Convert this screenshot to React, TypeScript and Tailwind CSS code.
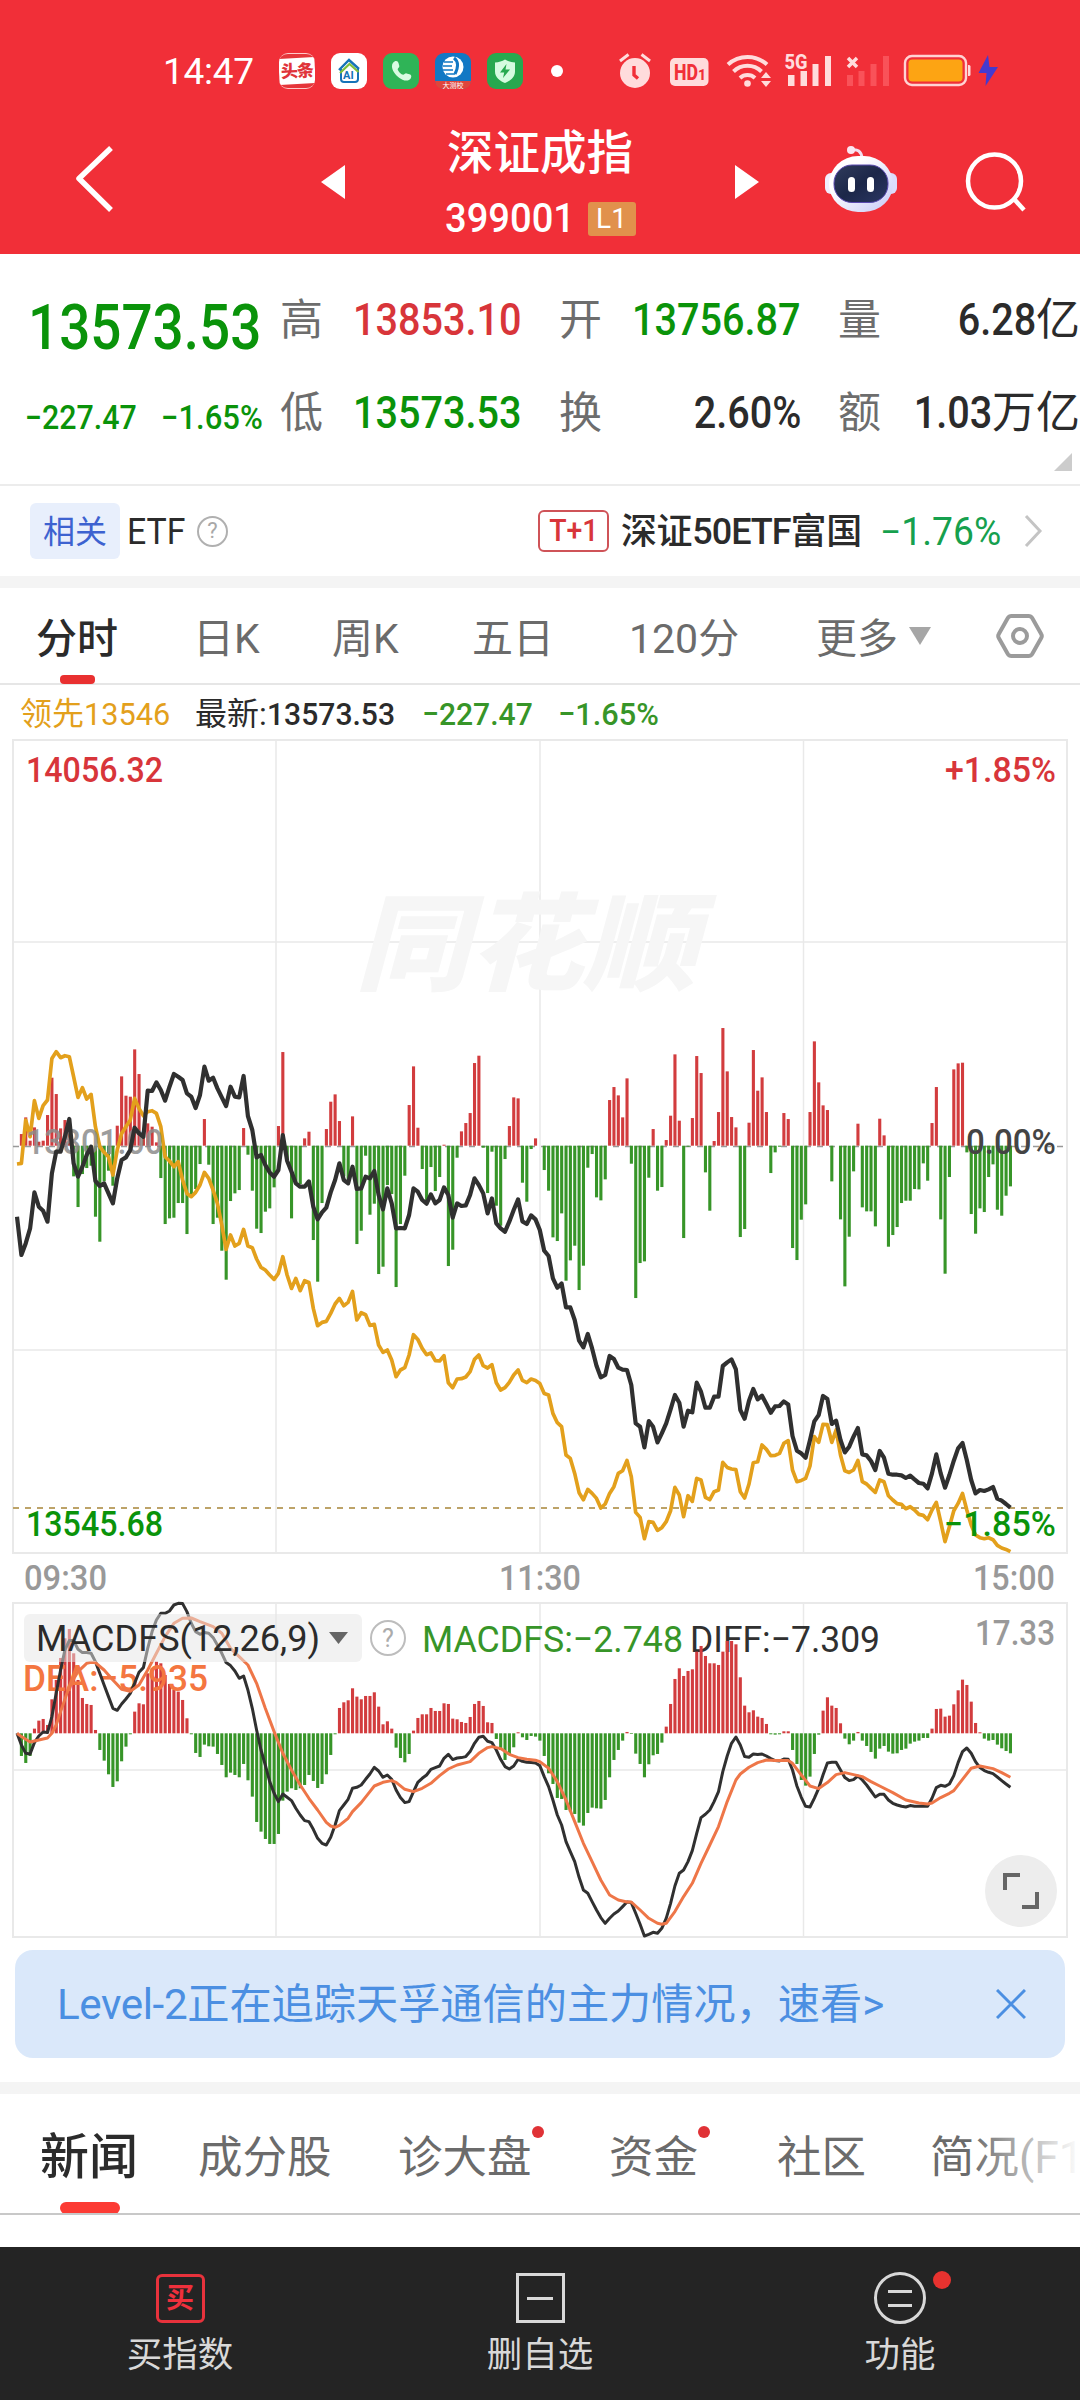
import { clsx } from "clsx";

const X0 = 17;
const STEP = 4.357;
// All series are stored in thirds of a pixel, measured from the zero line
const UNIT = 1 / 3;
const PRICE_ZERO = 1145.7;
const MACD_ZERO = 1733.3;

const flow = [
  0, 35, 85, 15, 55, 12, 15, 92, 204, 155, 52, 77, 40, -92, -184, -85, -67, -60, -213, -288,
  -107, -75, -120, 60, 208, 150, 147, 289, 215, 25, 67, 57, 10, -97, -235, -218, -216, -172, -172, -265,
  -150, -130, -55, 80, -57, -235, -216, -315, -402, -166, -143, -133, 53, -27, -135, -249, -262, -198, -188, -125,
  59, 281, -40, -218, -110, -115, 22, 42, -283, -408, -172, 50, 132, 154, 74, -92, -100, 88, -295, -255,
  -30, -207, -174, -385, -363, -118, -145, -424, -235, -90, 122, 238, 54, -70, -170, -64, -136, -94, 3, -361,
  -312, -36, 43, 68, 98, 248, 270, -6, -142, -18, -180, -240, -40, 59, 145, 142, -111, -168, -10, 22,
  0, -73, -135, -275, -286, -203, -405, -344, -300, -433, -360, -66, -25, -155, -164, -101, 137, 176, 151, 85,
  202, -54, -457, -352, -347, -96, 50, -135, -124, 17, 90, 274, 75, -277, -3, 83, 269, 218, -80, -195,
  14, 101, 353, 223, 86, 55, -274, -250, 69, 287, 165, 205, 101, -82, -20, -3, 98, 80, -307, -343,
  -222, -176, 101, 313, 190, 121, 107, -107, 0, -221, -422, -273, -77, 66, -185, -197, -197, -242, 81, 31,
  -303, -268, -244, -172, -165, -165, -130, -131, -53, -105, 68, 176, -221, -384, -94, 229, 247, 249, -20, -205,
  -264, -188, -199, -94, -56, -192, -210, -150, -122,
];

const price = [
  213, 328, 293, 248, 140, 183, 195, 228, 83, 18, 18, -27, -80, 53, 93, 63, 28, 3, 106, 121,
  113, 143, 173, 98, 43, 35, 13, -54, -37, -27, -165, -164, -190, -167, -135, -177, -215, -207, -197, -157,
  -147, -113, -152, -237, -195, -204, -172, -145, -119, -177, -147, -145, -209, -89, -47, 35, 28, 58, 80, 93,
  73, -32, 45, 78, 113, 123, 123, 107, 183, 221, 200, 186, 140, 103, 53, 103, 113, 63, 130, 128,
  93, 98, 76, 148, 191, 128, 173, 248, 247, 248, 208, 128, 138, 163, 174, 146, 173, 163, 125, 148,
  216, 173, 181, 179, 148, 98, 118, 143, 203, 158, 233, 248, 258, 228, 193, 161, 227, 235, 209, 221,
  253, 315, 331, 398, 426, 413, 485, 485, 523, 585, 605, 565, 608, 660, 695, 688, 631, 640, 666, 672,
  673, 718, 833, 843, 905, 826, 843, 890, 863, 833, 791, 748, 771, 843, 795, 800, 711, 738, 786, 786,
  753, 753, 661, 650, 641, 671, 793, 819, 765, 730, 761, 750, 775, 801, 782, 781, 767, 776, 871, 915,
  923, 936, 883, 827, 808, 751, 760, 835, 825, 883, 920, 903, 873, 847, 926, 929, 946, 973, 916, 936,
  984, 987, 987, 989, 997, 990, 1001, 1012, 1014, 1028, 983, 926, 983, 1026, 988, 945, 908, 892, 943, 1003,
  1043, 1033, 1036, 1031, 1024, 1059, 1065, 1075, 1086,
];

const lead = [
  55, 53, -77, -27, -135, -82, -120, -137, -262, -282, -264, -270, -267, -207, -145, -174, -140, -154, -57, 3,
  20, 33, 88, 13, -37, -57, -77, -142, -112, -90, -102, -105, -97, -57, 33, 46, 63, 48, 103, 143,
  153, 140, 118, 80, 98, 133, 173, 238, 311, 268, 301, 293, 251, 301, 306, 340, 365, 373, 388, 401,
  383, 333, 388, 428, 398, 435, 405, 410, 488, 540, 530, 527, 503, 475, 458, 480, 470, 437, 523, 501,
  507, 539, 536, 598, 620, 613, 643, 693, 673, 666, 628, 567, 581, 608, 627, 622, 645, 646, 630, 711,
  726, 700, 699, 694, 678, 641, 628, 660, 667, 657, 711, 733, 726, 710, 688, 673, 704, 711, 700, 704,
  713, 743, 748, 803, 831, 843, 928, 938, 983, 1041, 1062, 1031, 1043, 1058, 1087, 1075, 1043, 1023, 983, 975,
  944, 993, 1100, 1115, 1179, 1128, 1130, 1154, 1146, 1128, 1095, 1025, 1048, 1113, 1050, 1067, 998, 1003, 1055, 1062,
  1038, 1033, 950, 965, 970, 972, 1038, 1057, 1015, 951, 948, 898, 911, 930, 929, 923, 893, 885, 973, 1008,
  1004, 998, 961, 873, 890, 836, 837, 890, 853, 928, 975, 980, 973, 944, 1008, 1015, 1028, 1040, 1003, 1008,
  1050, 1063, 1074, 1076, 1089, 1083, 1093, 1106, 1109, 1122, 1093, 1070, 1128, 1188, 1143, 1095, 1073, 1043, 1093, 1138,
  1168, 1176, 1179, 1176, 1182, 1199, 1207, 1211, 1218,
];

const macd = [
  0, -68, -89, -68, 14, 38, 43, 25, 102, 160, 226, 285, 313, 240, 160, 106, 88, 85, 10, -50,
  -82, -123, -161, -144, -84, -40, -3, 65, 90, 87, 180, 195, 215, 210, 175, 148, 130, 125, 100, 45,
  -3, -59, -71, -34, -39, -40, -62, -95, -132, -118, -125, -132, -92, -141, -190, -266, -295, -317, -332, -332,
  -302, -202, -175, -165, -170, -165, -155, -125, -143, -164, -152, -123, -65, -3, 76, 93, 99, 135, 110, 102,
  112, 112, 123, 80, 27, 36, 14, -43, -74, -87, -62, 8, 46, 57, 57, 76, 67, 67, 90, 88,
  44, 42, 34, 31, 49, 88, 97, 82, 33, 31, -17, -50, -80, -65, -42, 3, -12, -20, -8, -10,
  -22, -68, -120, -152, -194, -197, -230, -235, -242, -268, -277, -239, -223, -225, -226, -200, -132, -80, -50, -22,
  4, -2, -61, -92, -132, -93, -66, -62, -28, 20, 88, 163, 195, 172, 187, 192, 245, 262, 232, 210,
  210, 205, 245, 277, 277, 267, 168, 83, 63, 69, 50, 46, 28, -3, -4, -3, 6, 6, -50, -92,
  -140, -157, -130, -62, -4, 68, 108, 83, 76, 30, -16, -33, -22, 4, -22, -38, -56, -76, -46, -38,
  -55, -61, -60, -50, -46, -31, -25, -22, -14, -14, 14, 73, 74, 50, 53, 87, 129, 161, 145, 95,
  31, 3, -16, -22, -20, -34, -45, -53, -60,
];

const diff = [
  0, 35, 60, 62, 28, 8, -4, -2, -50, -120, -190, -250, -278, -278, -252, -242, -242, -240, -215, -180,
  -145, -110, -75, -69, -88, -103, -120, -150, -183, -197, -255, -305, -340, -360, -360, -367, -385, -390, -389, -365,
  -330, -305, -297, -302, -300, -287, -265, -240, -212, -203, -187, -165, -172, -130, -75, -10, 50, 95, 145, 180,
  205, 182, 192, 202, 225, 245, 262, 265, 288, 315, 330, 335, 312, 275, 232, 215, 198, 165, 162, 155,
  138, 122, 102, 113, 132, 125, 138, 170, 193, 208, 205, 175, 147, 135, 125, 108, 103, 98, 75, 63,
  79, 74, 73, 70, 55, 30, 12, 9, 24, 28, 50, 78, 100, 107, 98, 78, 84, 87, 88, 89,
  97, 130, 160, 200, 245, 275, 325, 355, 385, 432, 470, 480, 505, 530, 553, 570, 555, 542, 533, 520,
  506, 508, 540, 573, 608, 603, 597, 600, 585, 555, 510, 458, 420, 410, 385, 352, 300, 253, 243, 230,
  205, 175, 115, 68, 30, 11, 35, 70, 72, 62, 64, 62, 68, 76, 82, 83, 77, 78, 110, 158,
  192, 219, 221, 195, 165, 125, 89, 87, 87, 110, 133, 142, 139, 128, 140, 155, 173, 191, 183, 183,
  200, 210, 215, 219, 221, 217, 219, 219, 218, 219, 195, 163, 156, 159, 152, 127, 88, 55, 44, 60,
  85, 103, 112, 117, 121, 131, 142, 152, 162,
];

const dea: [number, number][] = [
  [0, 0], [1, 10], [3, 26], [5, 20], [7, 14], [8, 0], [9, -25], [10, -65], [12, -140], [14, -185], [16, -210],
  [17, -213], [18, -212], [20, -190], [22, -160], [24, -132], [26, -126], [28, -145], [30, -190], [32, -240],
  [34, -290], [36, -330], [38, -345], [40, -346], [42, -335], [45, -320], [47, -300], [49, -255], [51, -230],
  [53, -205], [55, -150], [57, -75], [59, -5], [61, 60], [63, 110], [65, 155], [67, 195], [69, 230], [71, 267],
  [72, 278], [73, 282], [74, 276], [76, 255], [77, 235], [79, 208], [81, 175], [82, 158], [84, 147], [86, 142],
  [87, 147], [89, 168], [91, 175], [93, 165], [95, 150], [97, 127], [99, 107], [101, 95], [104, 85], [106, 60],
  [108, 43], [109, 40], [111, 46], [113, 63], [115, 73], [117, 78], [119, 81], [120, 85], [122, 105], [124, 145],
  [126, 200], [128, 265], [130, 330], [132, 385], [134, 440], [136, 485], [138, 500], [140, 506], [141, 506],
  [143, 530], [145, 555], [147, 570], [148, 573], [149, 570], [151, 535], [153, 490], [155, 450], [157, 390],
  [159, 335], [161, 280], [163, 205], [165, 140], [166, 122], [168, 102], [170, 88], [172, 80], [174, 82],
  [177, 82], [178, 90], [180, 125], [182, 158], [184, 166], [186, 148], [188, 124], [190, 118], [192, 124],
  [194, 130], [196, 145], [198, 158], [201, 178], [204, 200], [207, 209], [209, 212], [210, 209], [212, 193],
  [214, 180], [215, 172], [217, 138], [219, 105], [221, 98], [224, 106], [226, 118], [228, 132],
];

const toPoints = (pairs: [number, number][], zero: number) =>
  pairs.map(([i, v]) => `${(X0 + i * STEP).toFixed(1)},${(zero + v * UNIT).toFixed(1)}`).join(" ");

const indexed = (values: number[]) => values.map((v, i): [number, number] => [i, v]);

function Bars({ values, zero }: { values: number[]; zero: number }) {
  return (
    <>
      {values.map((v, i) =>
        v === 0 ? null : (
          <rect
            key={i}
            x={X0 + i * STEP - 1.5}
            y={v > 0 ? zero - v * UNIT : zero}
            width={3.1}
            height={Math.abs(v) * UNIT}
            fill={v > 0 ? "#d23c3e" : "#379528"}
          />
        )
      )}
    </>
  );
}

type LabelProps = {
  x: number;
  y: number;
  w: number;
  fill: string;
  size?: number;
  weight?: number;
  opacity?: number;
  children: string;
};

function Label({ x, y, w, fill, size = 35, weight = 500, opacity = 1, children }: LabelProps) {
  return (
    <text
      x={x}
      y={y}
      textLength={w}
      lengthAdjust="spacingAndGlyphs"
      fontSize={size}
      fontWeight={weight}
      fill={fill}
      opacity={opacity}
    >
      {children}
    </text>
  );
}

function StatusBar() {
  return (
    <div className="flex h-[142px] items-center pl-[163px] text-white">
      <span className="w-[116px] text-[37px] leading-none tracking-[-0.3px]">14:47</span>
      <div className="flex gap-4">
        <div className="flex size-9 items-center justify-center overflow-hidden rounded-[9px] border-y border-red-200 bg-[#e5353a]">
          <span className="flex h-[26px] w-9 -rotate-3 items-center justify-center whitespace-nowrap bg-white text-[17px] font-black leading-none tracking-[-1px] text-[#e0343a]">
            头条
          </span>
        </div>
        <svg viewBox="0 0 36 36" className="size-9">
          <rect width="36" height="36" rx="9" fill="#fff" />
          <path d="M8 17 18 7l10 9" fill="none" stroke="#1573b8" strokeWidth="2.4" />
          <path d="M10 16v10q0 3 3 3h11q3 0 3-3V16" fill="none" stroke="#1573b8" strokeWidth="2" />
          <path d="M9 20 18.500 11l9 8" fill="none" stroke="#7fbf3d" strokeWidth="2.2" />
          <text x="12" y="26" fontSize="11" fontWeight="700" fill="#1573b8">AI</text>
        </svg>
        <svg viewBox="0 0 36 36" className="size-9">
          <rect width="36" height="36" rx="9" fill="#2fb457" />
          <path
            d="M11.500 8.500c2-1 3.500-.3 4 1.500l.8 3c.3 1.300-1.600 2.400-1.600 3.300 0 1.700 3.800 5.500 5.500 5.500.9 0 2-1.700 3.300-1.400l3 .9c1.800.6 2.300 2.100 1.300 3.900-1.300 2.400-4.800 3.100-8.300 1.500C14.800 24.500 11 20.700 9.400 16c-1-3.200-.3-6.300 2.100-7.500Z"
            fill="#d9fbe2"
          />
        </svg>
        <svg viewBox="0 0 36 36" className="size-9">
          <rect width="36" height="36" rx="9" fill="#1278c4" />
          <circle cx="18" cy="14" r="10.500" fill="#fff" />
          <path d="M9 9h9M8 13h9M8 17h10M11 21h9" stroke="#1278c4" strokeWidth="1.500" />
          <path d="M19 5c4 3 5 8 1 16" fill="none" stroke="#1278c4" strokeWidth="3" />
          <path d="M0 28h36q-1 8-9 8H9q-8 0-9-8Z" fill="#e0453c" />
          <text x="7.500" y="34.500" fontSize="7" fill="#fff">大测校</text>
        </svg>
        <svg viewBox="0 0 36 36" className="size-9">
          <rect width="36" height="36" rx="9" fill="#27a84f" />
          <path d="M18 6.500c3 2 6 2.600 10 3v9c0 6-5 9.500-10 11.500-5-2-10-5.500-10-11.500v-9c4-.4 7-1 10-3Z" fill="#d6fbe0" />
          <path d="m19.500 11-6.500 8.500h4.200L16 25l7-8.500h-4.500Z" fill="#27a84f" />
        </svg>
      </div>
      <span className="ml-7 size-3 rounded-full bg-white" />
      <svg viewBox="619 50 385 42" className="ml-14 h-[42px] w-[385px]" fill="#ffdcdc">
        <circle cx="635" cy="73" r="15" />
        <path d="m620 61 8.500-6.500M650 61l-8.500-6.500" stroke="#ffdcdc" strokeWidth="3" />
        <path d="M634 66v9l4 3.500" fill="none" stroke="#f12f38" strokeWidth="3.400" />
        <rect x="670" y="58" width="38.500" height="28" rx="5" />
        <text x="674" y="80" fontSize="22" fontWeight="800" fill="#f12f38" textLength="24" lengthAdjust="spacingAndGlyphs">HD</text>
        <text x="698" y="80" fontSize="14" fontWeight="800" fill="#f12f38">1</text>
        <g fill="none" stroke="#ffdcdc" strokeWidth="4">
          <path d="M728 64.500a29 29 0 0 1 39 0" />
          <path d="M733.500 71.500a20 20 0 0 1 28 0" />
          <path d="M740 78a11 11 0 0 1 15 0" />
        </g>
        <circle cx="747.500" cy="83.500" r="3.300" />
        <path d="m766 72 5 6h-10ZM766 87l5-6h-10Z" />
        <text x="784.500" y="68.500" fontSize="20" fontWeight="800" textLength="23" lengthAdjust="spacingAndGlyphs">5G</text>
        <path d="M788 75h6.500v11H788zM800.500 71h6.500v15h-6.500zM812.500 64h6v22h-6zM825 56h6v30h-6z" />
        <path d="m848 58 9 9m0-9-9 9" stroke="#ffdcdc" strokeWidth="3.500" />
        <path d="M847 75h6v11h-6zM858.500 71h6v15h-6zM870.500 64h6v22h-6zM883 56h6v30h-6z" fill="#f95259" />
        <rect x="905" y="56" width="61" height="29" rx="7" fill="none" stroke="#ffd3d3" strokeWidth="2.400" />
        <rect x="908.500" y="59.500" width="54" height="22" rx="4" fill="#fda413" />
        <path d="M968 65h1q1.500 0 1.500 1.500v8q0 1.500-1.500 1.500h-1z" />
        <path d="m988 55-9.500 18h8l-1 13 12.500-19h-8.500Z" fill="#443ad0" />
      </svg>
    </div>
  );
}

function Header() {
  return (
    <header className="h-[254px] bg-[#f12f38]">
      <StatusBar />
      <div className="-mt-[22px] flex items-start text-white">
        <svg viewBox="0 0 40 68" className="ml-[74px] mt-[25px] h-[68px] w-10">
          <path d="M37 3 5 33.500 37 65" fill="none" stroke="#fff" strokeWidth="5.500" strokeLinejoin="round" />
        </svg>
        <svg viewBox="0 0 24 34" className="ml-[207px] mt-[45px] h-[34px] w-6" fill="#fff">
          <path d="M24 0v34L0 17Z" />
        </svg>
        <div className="ml-[95px] flex w-[200px] flex-col items-center">
          <h1 className="mt-[10px] text-[46.5px] font-medium leading-none">深证成指</h1>
          <div className="mt-[25px] flex h-[34px] items-center gap-4">
            <span className="w-[127px] whitespace-nowrap text-[41px] font-medium leading-none">
              <span className="inline-block origin-left scale-x-[0.93]">399001</span>
            </span>
            <span className="flex h-[34px] w-12 items-center justify-center rounded-[3px] bg-[#e1914c] text-[28px] leading-none">
              L1
            </span>
          </div>
        </div>
        <svg viewBox="0 0 24 34" className="ml-[95px] mt-[45px] h-[34px] w-6" fill="#fff">
          <path d="M0 0v34l24-17Z" />
        </svg>
        <svg viewBox="0 0 72 68" className="ml-[66px] mt-[25px] h-[68px] w-[72px]">
          <defs>
            <linearGradient id="shell" x1="0" y1="0" x2="1" y2="1">
              <stop offset="0.3" stopColor="#fff" />
              <stop offset="1" stopColor="#c6c9f7" />
            </linearGradient>
            <linearGradient id="visor" x1="0" y1="0" x2="1" y2="1">
              <stop offset="0" stopColor="#303c5c" />
              <stop offset="0.5" stopColor="#1c2749" />
              <stop offset="1" stopColor="#2b3763" />
            </linearGradient>
          </defs>
          <path d="M26 5q10-2 11 8" fill="none" stroke="#f3dff0" strokeWidth="3" />
          <circle cx="26" cy="5" r="4" fill="#fbe6f1" />
          <rect x="0" y="28" width="14" height="21" rx="6" fill="#f1edfd" />
          <rect x="58" y="28" width="14" height="21" rx="6" fill="#dcdcfb" />
          <rect x="4" y="11" width="64" height="56" rx="29" fill="url(#shell)" />
          <rect x="9" y="20" width="54" height="37.500" rx="18" fill="url(#visor)" stroke="#5a4ab0" strokeWidth="1" />
          <rect x="23" y="32" width="7" height="15" rx="3.500" fill="#fff" />
          <rect x="42" y="32" width="7" height="15" rx="3.500" fill="#fff" />
        </svg>
        <svg viewBox="0 0 62 62" className="ml-[68px] mt-[31px] size-[62px]" fill="none" stroke="#fff" strokeWidth="4.500">
          <circle cx="29.500" cy="30" r="26.500" />
          <path d="m49 48 10 11" />
        </svg>
      </div>
    </header>
  );
}

const quoteRows = [
  [
    { label: "高", value: "13853.10", color: "text-[#d8353a]" },
    { label: "开", value: "13756.87", color: "text-[#0a930a]" },
    { label: "量", value: "6.28", suffix: "亿", color: "text-[#2b2b2b]" },
  ],
  [
    { label: "低", value: "13573.53", color: "text-[#0a930a]" },
    { label: "换", value: "2.60%", color: "text-[#2b2b2b]" },
    { label: "额", value: "1.03", suffix: "万亿", color: "text-[#2b2b2b]" },
  ],
];

function Quote() {
  return (
    <section className="relative flex h-[232px] overflow-hidden border-b-2 border-[#ececec]">
      <div className="w-[280px] shrink-0 font-medium text-[#0a930a]">
        <div className="ml-[28px] mt-[42px] h-[64px] origin-left scale-x-[0.87] whitespace-nowrap text-[63px] leading-[64px]">
          13573.53
        </div>
        <div className="mt-[40px] flex whitespace-nowrap text-[33px] leading-[36px]">
          <span className="ml-[25px] w-[136px] origin-left scale-x-[0.92]">−227.47</span>
          <span className="origin-left scale-x-[0.94]">−1.65%</span>
        </div>
      </div>
      <div className="flex w-[800px] shrink-0 flex-col pt-[40px]">
        {quoteRows.map((row, r) => (
          <div key={r} className="flex h-[93px] items-start">
            {row.map((cell, c) => (
              <div
                key={cell.label}
                className={clsx("flex w-[242px] shrink-0 justify-between leading-[52px]", c < 2 && "mr-[37px]")}
              >
                <span className="text-[43px] text-[#6d6d6d]">{cell.label}</span>
                <span className={clsx("flex justify-end whitespace-nowrap text-[45px] font-medium", cell.color)}>
                  <span className="origin-right scale-x-[0.88]">{cell.value}</span>
                  {cell.suffix && <span className="text-[44px] font-normal">{cell.suffix}</span>}
                </span>
              </div>
            ))}
          </div>
        ))}
      </div>
      <svg viewBox="0 0 18 18" className="absolute right-2 top-[199px] size-[18px]" fill="#ccc">
        <path d="M18 0v18H0Z" />
      </svg>
    </section>
  );
}

function EtfRow() {
  return (
    <section className="flex h-[90px] items-center whitespace-nowrap">
      <span className="ml-[30px] flex h-14 w-[90px] items-center justify-center rounded-md bg-[#e8effc] pt-[2px] text-[32px] text-[#3d62d0]">
        相关
      </span>
      <span className="ml-[7px] w-[70px] origin-left scale-x-[0.94] pt-[2px] text-[36px] text-[#2b2b2b]">ETF</span>
      <span className="flex size-[31px] items-center justify-center rounded-full border-2 border-[#b0b0b0] text-[22px] leading-none text-[#a8a8a8]">
        ?
      </span>
      <span className="ml-[310px] flex h-[42px] w-[71px] items-center justify-center rounded-md border-2 border-[#cf5358] text-[31px] font-medium text-[#d8353a]">
        <span className="scale-x-[0.92]">T+1</span>
      </span>
      <span className="ml-[12px] w-[259px] pt-[2px] text-[36px] font-medium tracking-[-0.4px] text-[#2b2b2b]">
        深证<span className="tracking-[-1px]">50ETF</span>富国
      </span>
      <span className="w-[143px] origin-left scale-x-[0.98] pt-[2px] text-[38px] text-[#16a04e]">−1.76%</span>
      <svg viewBox="0 0 20 34" className="h-[34px] w-5" fill="none" stroke="#c4c4c4" strokeWidth="3">
        <path d="m3 2 14 15L3 32" />
      </svg>
    </section>
  );
}

function PeriodTabs() {
  return (
    <nav className="flex h-[97px] items-start whitespace-nowrap border-b-2 border-[#e6e6e6] pt-[24px] text-[41px] leading-[54px] text-[#6b6b6b]">
      <div className="ml-[36px] flex w-[157px] flex-col text-[#2b2b2b]">
        <span className="font-medium">分时</span>
        <span className="ml-[24px] mt-[9px] h-[9px] w-[35px] rounded bg-[#e93030]" />
      </div>
      <span className="w-[139px]">日K</span>
      <span className="w-[140px]">周K</span>
      <span className="w-[157px]">五日</span>
      <span className="w-[187px]">120分</span>
      <span>更多</span>
      <svg viewBox="0 0 22 18" className="ml-[11px] mt-[15px] h-[18px] w-[22px]" fill="#a6a6a6">
        <path d="M0 0h22L11 18Z" />
      </svg>
      <svg viewBox="0 0 48 46" className="ml-[65px] mt-[1px] h-[46px] w-12" fill="none" stroke="#9b9b9b" strokeWidth="4">
        <path d="M15.500 3h17q2.500 0 3.700 2l9 16q1.200 2 0 4l-9 16q-1.200 2-3.700 2h-17q-2.500 0-3.700-2l-9-16q-1.200-2 0-4l9-16q1.200-2 3.700-2Z" />
        <circle cx="24" cy="23" r="7" />
      </svg>
    </nav>
  );
}

function Legend() {
  return (
    <div className="flex h-[54px] items-center whitespace-nowrap pl-5 pt-1 text-[32px] font-medium leading-none">
      <span className="flex w-[175px] text-[#e3a01c]">
        <span className="font-normal">领先</span>
        <span className="origin-left scale-x-[0.96] font-normal">13546</span>
      </span>
      <span className="flex w-[227px] text-[#2b2b2b]">
        <span className="font-normal">最新:</span>
        <span className="origin-left scale-x-[0.94]">13573.53</span>
      </span>
      <span className="w-[136px] origin-left scale-x-[0.94] text-[#379528]">−227.47</span>
      <span className="origin-left scale-x-[0.96] text-[#379528]">−1.65%</span>
    </div>
  );
}

function PriceChart() {
  return (
    <svg viewBox="0 739 1080 862" className="block h-[862px] w-[1080px]">
      <g fill="none" stroke="#e9e9e9" strokeWidth="2">
        <path d="M13 740h1054v813H13Z" />
        <path d="M13 942h1054M13 1350h1054M276 740v813M540 740v813M803.500 740v813" strokeWidth="1.500" />
      </g>
      <text
        x="355"
        y="982"
        fontSize="106"
        fontWeight="900"
        fontStyle="italic"
        fill="#f6f6f6"
        textLength="342"
        lengthAdjust="spacingAndGlyphs"
      >
        同花顺
      </text>
      <path d="M13 1146.500h1054" stroke="#999" strokeWidth="1.500" strokeDasharray="6 6" />
      <path d="M13 1508h1054" stroke="#bda368" strokeWidth="1.800" strokeDasharray="6 6" />
      <Bars values={flow} zero={PRICE_ZERO} />
      <polyline points={toPoints(indexed(lead), PRICE_ZERO)} fill="none" stroke="#e3a01c" strokeWidth="3.700" strokeLinejoin="round" />
      <Label x={26} y={1154} w={137} fill="#8c8c8c" opacity={0.85}>13801.00</Label>
      <polyline points={toPoints(indexed(price), PRICE_ZERO)} fill="none" stroke="#303030" strokeWidth="4.200" strokeLinejoin="round" />
      <Label x={26} y={782} w={137} fill="#d8353a">14056.32</Label>
      <Label x={945} y={782} w={111} fill="#d8353a">+1.85%</Label>
      <Label x={966} y={1154} w={90} fill="#444444">0.00%</Label>
      <Label x={26} y={1536} w={137} fill="#0a930a">13545.68</Label>
      <Label x={944} y={1536} w={112} fill="#0a930a">−1.85%</Label>
      <Label x={24} y={1590} w={83} fill="#999999">09:30</Label>
      <Label x={499} y={1590} w={82} fill="#999999">11:30</Label>
      <Label x={973} y={1590} w={82} fill="#999999">15:00</Label>
    </svg>
  );
}

function MacdChart() {
  return (
    <section className="relative">
      <svg viewBox="0 1601 1080 349" className="block h-[349px] w-[1080px]">
        <g fill="none" stroke="#e9e9e9" strokeWidth="2">
          <path d="M13 1603h1054v334H13Z" />
          <path d="M13 1770h1054M276 1603v334M540 1603v334M803.500 1603v334" strokeWidth="1.500" />
        </g>
        <Label x={422} y={1652} w={261} fill="#379528" size={37} weight={400}>MACDFS:−2.748</Label>
        <Label x={690} y={1652} w={190} fill="#303030" size={37} weight={400}>DIFF:−7.309</Label>
        <Label x={975} y={1645} w={80} fill="#999999">17.33</Label>
        <Bars values={macd} zero={MACD_ZERO} />
        <Label x={23} y={1691} w={185} fill="#f47640" size={37}>DEA:−5.935</Label>
        <polyline points={toPoints(indexed(diff), MACD_ZERO)} fill="none" stroke="#303030" strokeWidth="3" strokeLinejoin="round" />
        <polyline points={toPoints(dea, MACD_ZERO)} fill="none" stroke="#ee7648" strokeWidth="3" strokeLinejoin="round" />
      </svg>
      <div className="absolute left-6 top-[13px] flex h-[48px] w-[338px] items-center rounded-md bg-[#e6e6e6]/50 text-[#2b2b2b]">
        <svg viewBox="36 1614 320 48" className="ml-3 h-12 w-[320px]">
          <Label x={36} y={1651} w={284} fill="#2b2b2b" size={37} weight={400}>MACDFS(12,26,9)</Label>
          <path d="M329 1632h19l-9.500 12Z" fill="#666" />
        </svg>
      </div>
      <span className="absolute left-[370px] top-[19px] flex size-9 items-center justify-center rounded-full border-[2.500px] border-[#bdbdbd] text-[25px] leading-none text-[#ababab]">
        ?
      </span>
      <span className="absolute left-[985px] top-[254px] flex size-[72px] items-center justify-center rounded-full bg-[#ededed]">
        <svg viewBox="0 0 38 38" className="size-[38px]" fill="none" stroke="#666" strokeWidth="4">
          <path d="M3 18V3h15M35 20v15H20" />
        </svg>
      </span>
    </section>
  );
}

function Banner() {
  return (
    <div className="mx-[15px] flex h-[108px] items-center rounded-[18px] bg-[#dae8fa] pl-[42px] text-[#4b8fe2]">
      <span className="w-[939px] whitespace-nowrap pt-[3px] text-[42.2px] leading-none">
        <span className="tracking-[-0.4px]">Level-2</span>正在追踪天孚通信的主力情况，速看&gt;
      </span>
      <svg viewBox="0 0 30 30" className="size-[30px]" fill="none" stroke="#4b8fe2" strokeWidth="3">
        <path d="m1 1 28 28M29 1 1 29" />
      </svg>
    </div>
  );
}

const newsTabs = [
  { label: "成分股", width: "w-[200px]" },
  { label: "诊大盘", width: "w-[211px]", dot: true },
  { label: "资金", width: "w-[168px]", dot: true },
  { label: "社区", width: "w-[153px]" },
];

function NewsTabs() {
  return (
    <nav className="relative flex h-[121px] items-start overflow-hidden whitespace-nowrap border-b-2 border-[#c8c8c8] text-[44.5px] leading-[60px] text-[#6b6b6b]">
      <div className="ml-10 flex w-[158px] shrink-0 flex-col text-[#2b2b2b]">
        <span className="mt-[34px] text-[49px] font-medium">新闻</span>
        <span className="ml-5 mt-[14px] h-3 w-[60px] rounded-full bg-[#fc3b34]" />
      </div>
      {newsTabs.map((tab) => (
        <div key={tab.label} className={clsx("mt-[34px] shrink-0", tab.width)}>
          <span className="relative">
            {tab.label}
            {tab.dot && <i className="absolute -right-3 -top-[6px] size-3 rounded-full bg-[#e03236]" />}
          </span>
        </div>
      ))}
      <span className="mt-[34px]">简况(F10)</span>
      <div className="absolute right-0 top-0 h-[118px] w-[110px] bg-linear-to-r from-white/0 to-white" />
    </nav>
  );
}

function BottomBar() {
  return (
    <footer className="grid h-[153px] grid-cols-3 bg-[#242424] text-[35.5px] leading-none text-[#d8d8d8]">
      <div className="flex flex-col items-center">
        <span className="mt-[27px] flex size-[49px] items-center justify-center rounded-md border-[3px] border-[#e8323c] text-[28px] font-bold leading-none text-[#f0303c]">
          买
        </span>
        <span className="mt-[15px]">买指数</span>
      </div>
      <div className="flex flex-col items-center">
        <span className="mt-[26px] flex h-[50px] w-[49px] items-center justify-center border-[3px] border-[#d8d8d8]">
          <i className="h-[3px] w-[26px] bg-[#d8d8d8]" />
        </span>
        <span className="mt-[15px]">删自选</span>
      </div>
      <div className="flex flex-col items-center">
        <span className="relative mt-[25px] flex size-[52px] flex-col items-center justify-center gap-[11px] rounded-full border-[3px] border-[#d8d8d8]">
          <i className="h-[3px] w-6 bg-[#d8d8d8]" />
          <i className="h-[3px] w-6 bg-[#d8d8d8]" />
          <i className="absolute -right-[28px] -top-[4px] size-[18px] rounded-full bg-[#e8322f]" />
        </span>
        <span className="mt-[14px]">功能</span>
      </div>
    </footer>
  );
}

export default function App() {
  return (
    <div className="h-[2400px] w-[1080px] overflow-hidden bg-white font-['Roboto','Noto_Sans_CJK_SC',sans-serif]">
      <Header />
      <Quote />
      <EtfRow />
      <div className="h-3 bg-[#f4f4f4]" />
      <PeriodTabs />
      <Legend />
      <PriceChart />
      <MacdChart />
      <Banner />
      <div className="mt-6 h-3 bg-[#f4f4f4]" />
      <NewsTabs />
      <div className="h-8" />
      <BottomBar />
    </div>
  );
}
